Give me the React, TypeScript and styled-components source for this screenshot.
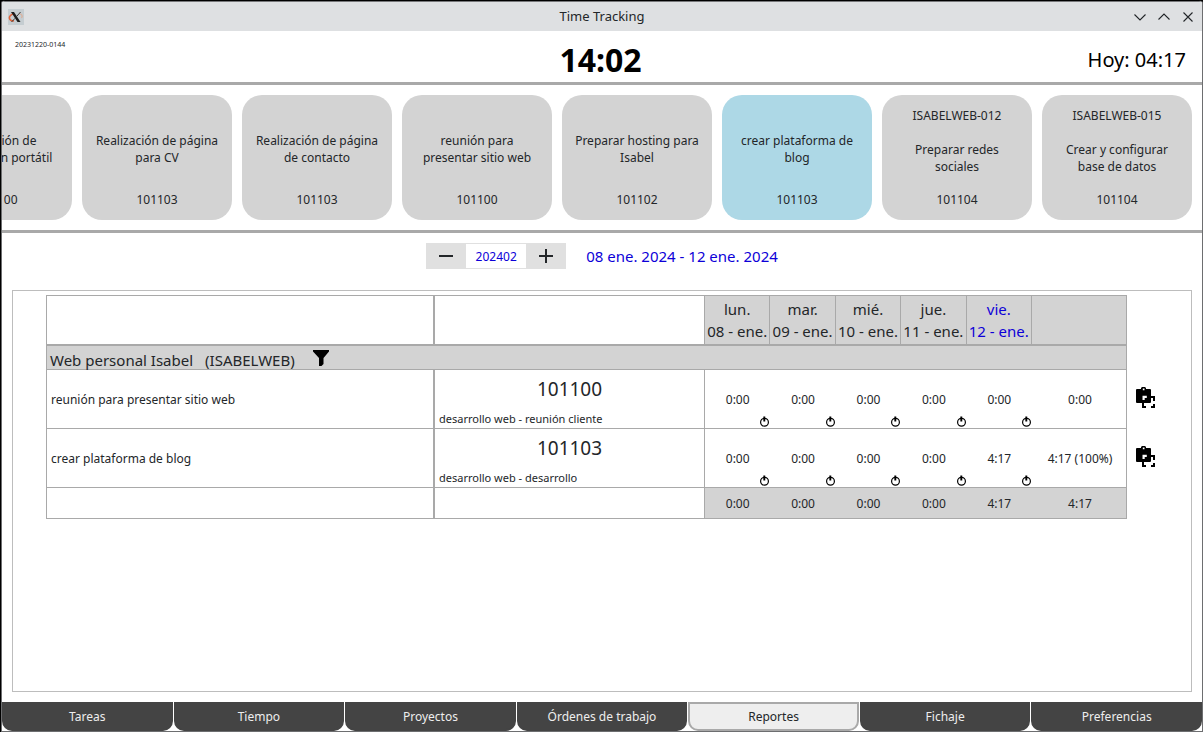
import React, { useState } from 'react';
import styled, { createGlobalStyle, css } from 'styled-components';

const line = '#a9a9a9';
const shade = '#d3d3d3';
const ink = '#232629';
const accent = '#0d00d8';

const GlobalStyle = createGlobalStyle`
  * { box-sizing: border-box; }
  body {
    margin: 0;
    background: #000;
    color: ${ink};
    font-family: 'Noto Sans', sans-serif;
    font-size: 12px;
    line-height: 17px;
  }
  button, input {
    margin: 0;
    padding: 0;
    border: 0;
    font: inherit;
    color: inherit;
  }
  button { background: none; cursor: pointer; }
  svg { display: block; }
`;

const Window = styled.div`
  display: flex;
  flex-direction: column;
  min-height: 100vh;
  border: 1px solid #6d6e70;
  border-radius: 4px 4px 0 0;
  margin-left: 1px;
  background: #fff;
  overflow: hidden;
  border-top-color: #000;
`;

const TitleBar = styled.header`
  display: grid;
  grid-template-columns: 1fr auto 1fr;
  align-items: center;
  height: 30px;
  padding: 0 6px;
  background: #dee0e2;
  border-top: 1px solid #77787a;
  font-size: 13px;
`;

const WindowTitle = styled.h1`
  margin: 0;
  font-size: inherit;
  font-weight: 400;
`;

const WindowControls = styled.div`
  display: flex;
  justify-content: flex-end;
  gap: 8px;
`;

const Header = styled.div`
  display: grid;
  grid-template-columns: 1fr auto 1fr;
  align-items: center;
  height: 54px;
  padding: 0 16px 0 13px;
  border-bottom: 3px solid ${line};
  color: #000;
`;

const Version = styled.span`
  align-self: start;
  padding-top: 5px;
  color: ${ink};
  font-size: 7px;
`;

const Clock = styled.strong`
  padding-top: 6px;
  font-size: 32px;
  line-height: 44px;
`;

const Today = styled.span`
  justify-self: end;
  padding-top: 6px;
  font-size: 20px;
  line-height: 28px;
`;

const Strip = styled.div`
  display: flex;
  justify-content: flex-end;
  gap: 10px;
  padding: 10px;
  border-bottom: 3px solid ${line};
  overflow: hidden;
`;

const Card = styled.button<{ $active?: boolean }>`
  display: flex;
  flex: none;
  flex-direction: column;
  align-items: center;
  width: 150px;
  height: 125px;
  padding: 12px 10px;
  border-radius: 20px;
  background: ${(p) => (p.$active ? '#add8e6' : shade)};
`;

const CardTitle = styled.span`
  display: flex;
  flex: 1;
  align-items: center;
  text-align: center;
`;

const WeekBar = styled.div`
  display: flex;
  justify-content: center;
  align-items: center;
  gap: 20px;
  padding: 10px 10px 21px;
  color: ${accent};
`;

const Stepper = styled.div`
  display: flex;
  height: 26px;
`;

const StepButton = styled.button`
  display: grid;
  place-items: center;
  width: 40px;
  background: #e0e0e0;
  color: ${ink};
`;

const WeekInput = styled.input`
  width: 60px;
  border: solid #e0e0e0;
  border-width: 1px 0;
  text-align: center;
`;

const WeekRange = styled.span`
  font-size: 15px;
`;

const Panel = styled.main`
  flex: 1;
  margin: 0 10px 10px;
  padding: 4px 0 4px 33px;
  border: 1px solid #bdbdbd;
`;

const Report = styled.table`
  width: 100%;
  min-width: 1080px;
  table-layout: fixed;
  border-spacing: 0;
`;

const TaskCol = styled.col` width: 389px; `;
const OrderCol = styled.col` width: 270px; `;
const TotalCol = styled.col` width: 95px; `;
const ActionCol = styled.col` width: 64px; `;

const cell = css`
  padding: 0;
  border: 0 solid ${line};
  border-bottom-width: 1px;
  font-weight: 400;
`;

const HeadCell = styled.th<{ $filled?: boolean; $today?: boolean; $wide?: boolean }>`
  ${cell}
  height: 51px;
  border-width: 1px ${(p) => (p.$wide ? 2 : 1)}px 2px 0;
  &:first-child { border-left-width: 1px; }
  background: ${(p) => (p.$filled ? shade : 'transparent')};
  color: ${(p) => (p.$today ? accent : 'inherit')};
  font-size: 15px;
  line-height: 22px;
  white-space: nowrap;
`;

const GroupCell = styled.th`
  ${cell}
  height: 24px;
  padding: 0 3px;
  border-left-width: 1px;
  border-right-width: 1px;
  background: ${shade};
  font-size: 15px;
  line-height: 21px;
  text-align: left;
`;

const GroupLine = styled.div`
  display: flex;
  align-items: flex-start;
  height: 23px;
  padding-top: 4px;
`;

const GroupCode = styled.span`
  margin: 0 18px 0 12px;
`;

const TaskCell = styled.th`
  ${cell}
  height: 59px;
  padding: 0 4px;
  border-left-width: 1px;
  border-right-width: 2px;
  text-align: left;
`;

const OrderCell = styled.td`
  ${cell}
  padding: 4px 4px 0;
  border-right-width: 1px;
`;

const OrderNumber = styled.div`
  margin-bottom: 7px;
  font-size: 19px;
  line-height: 28px;
  text-align: center;
`;

const OrderNote = styled.div`
  font-size: 11px;
`;

const TimeCell = styled.td<{ $last?: boolean }>`
  ${cell}
  position: relative;
  border-right-width: ${(p) => (p.$last ? 1 : 0)}px;
  padding-left: ${(p) => (p.$last ? 2 : 0)}px;
  text-align: center;
`;

const StartButton = styled.button`
  position: absolute;
  right: 0;
  bottom: 1px;
`;

const ActionCell = styled.td`
  padding: 1px 0 0 9px;
`;

const SumBlank = styled.td<{ $wide?: boolean }>`
  ${cell}
  height: 31px;
  border-right-width: ${(p) => (p.$wide ? 2 : 1)}px;
  &:first-child { border-left-width: 1px; }
`;

const SumCell = styled(TimeCell)`
  background: ${shade};
`;

const Tabs = styled.nav`
  display: grid;
  grid-template-columns: repeat(7, 1fr);
  gap: 1px;
`;

const Tab = styled.button<{ $active?: boolean }>`
  height: 29px;
  border: 2px solid ${(p) => (p.$active ? line : '#444')};
  border-radius: 0 0 10px 10px;
  background: ${(p) => (p.$active ? '#eee' : '#444')};
  color: ${(p) => (p.$active ? ink : '#eee')};
`;

const AppIcon = () => (
  <svg width="16" height="16" viewBox="0 0 16 16" aria-hidden="true">
    <rect width="16" height="16" fill="#c5cdd1" />
    <path d="M6 4.5C2 5.5 .5 8.500 2 10.500 3 12 5 12 6 11.800" fill="none" stroke="#e0633a" strokeWidth="1.600" />
    <path d="M11 4.500C14 5 15 7 13.500 9" fill="none" stroke="#dcae98" strokeWidth="1.200" />
    <path d="M3 3h3l6.500 10H9.500z" fill="#1c1c1c" />
    <path d="M12.500 3 8.800 7.300M7 9.300 3.500 13" stroke="#3c3c3c" strokeWidth="1" />
  </svg>
);

const ControlIcon = ({ d }: { d: string }) => (
  <svg width="16" height="16" viewBox="0 0 16 16" fill="none" stroke={ink} strokeWidth="1.100" aria-hidden="true">
    <path d={d} />
  </svg>
);

const SignIcon = ({ plus }: { plus?: boolean }) => (
  <svg width="14" height="14" viewBox="0 0 14 14" stroke={ink} strokeWidth="2" aria-hidden="true">
    <path d={plus ? 'M0 7H14M7 0V14' : 'M0 7H14'} />
  </svg>
);

const FunnelIcon = () => (
  <svg width="16" height="16" viewBox="0 0 16 16" aria-hidden="true">
    <path d="M0 0H16V1.500L10.500 8V14L8.500 16H6V8L0 1.500Z" fill="#000" />
  </svg>
);

const PowerIcon = () => (
  <svg width="11" height="11" viewBox="0 0 11 11" fill="none" stroke="#000" aria-hidden="true">
    <circle cx="5.500" cy="6.300" r="3.900" strokeWidth="1.200" />
    <path d="M5.300 .5V5.500" strokeWidth="1.900" />
  </svg>
);

const CopyIcon = () => (
  <svg width="20" height="22" viewBox="0 0 20 22" aria-hidden="true">
    <path
      fill="#000"
      fillRule="evenodd"
      d="M1 2H5V1L6 0H9L10 1V2H14Q15 2 15 3V15Q15 16 14 16H1Q0 16 0 15V3Q0 2 1 2ZM6.800 1.500V3.200H8.500V1.500ZM6.500 8.700V13H8.700V11H10.800V8.700Z"
    />
    <path fill="#000" d="M15 9H19V14H17V11H15ZM6 16H8V19H10V21H6ZM15 19H17V17H19V21H15Z" />
  </svg>
);

const cards = [
  { title: 'Instalación de software\u00a0en\u00a0portátil', order: '101100' },
  { title: 'Realización de página para CV', order: '101103' },
  { title: 'Realización de página de contacto', order: '101103' },
  { title: 'reunión para presentar sitio web', order: '101100' },
  { title: 'Preparar hosting para Isabel', order: '101102' },
  { title: 'crear plataforma de blog', order: '101103', active: true },
  { ticket: 'ISABELWEB-012', title: 'Preparar redes sociales', order: '101104' },
  { ticket: 'ISABELWEB-015', title: 'Crear y configurar base de datos', order: '101104' },
];

const days = [
  ['lun.', '08 - ene.'],
  ['mar.', '09 - ene.'],
  ['mié.', '10 - ene.'],
  ['jue.', '11 - ene.'],
  ['vie.', '12 - ene.'],
];

const tasks = [
  {
    name: 'reunión para presentar sitio web',
    order: '101100',
    note: 'desarrollo web - reunión cliente',
    times: ['0:00', '0:00', '0:00', '0:00', '0:00'],
    total: '0:00',
  },
  {
    name: 'crear plataforma de blog',
    order: '101103',
    note: 'desarrollo web - desarrollo',
    times: ['0:00', '0:00', '0:00', '0:00', '4:17'],
    total: '4:17 (100%)',
  },
];

const sums = ['0:00', '0:00', '0:00', '0:00', '4:17', '4:17'];

const tabs = ['Tareas', 'Tiempo', 'Proyectos', 'Órdenes de trabajo', 'Reportes', 'Fichaje', 'Preferencias'];

export default function App() {
  const [week, setWeek] = useState('202402');
  const [tab, setTab] = useState('Reportes');
  const step = (n: number) => setWeek(String(Number(week) + n));

  return (
    <>
      <GlobalStyle />
      <Window>
        <TitleBar>
          <AppIcon />
          <WindowTitle>Time Tracking</WindowTitle>
          <WindowControls>
            <button aria-label="Minimizar"><ControlIcon d="M2.500 5.500 8 11 13.500 5.500" /></button>
            <button aria-label="Maximizar"><ControlIcon d="M2.500 10.500 8 5 13.500 10.500" /></button>
            <button aria-label="Cerrar"><ControlIcon d="M3.500 3.500 12.500 12.500M12.500 3.500 3.500 12.500" /></button>
          </WindowControls>
        </TitleBar>

        <Header>
          <Version>20231220-0144</Version>
          <Clock>14:02</Clock>
          <Today>Hoy: 04:17</Today>
        </Header>

        <Strip>
          {cards.map((c) => (
            <Card key={c.title} $active={c.active}>
              {c.ticket && <span>{c.ticket}</span>}
              <CardTitle>{c.title}</CardTitle>
              <span>{c.order}</span>
            </Card>
          ))}
        </Strip>

        <WeekBar>
          <Stepper>
            <StepButton aria-label="Semana anterior" onClick={() => step(-1)}><SignIcon /></StepButton>
            <WeekInput aria-label="Semana" value={week} onChange={(e) => setWeek(e.target.value)} />
            <StepButton aria-label="Semana siguiente" onClick={() => step(1)}><SignIcon plus /></StepButton>
          </Stepper>
          <WeekRange>08 ene. 2024 - 12 ene. 2024</WeekRange>
        </WeekBar>

        <Panel>
          <Report>
            <colgroup>
              <TaskCol />
              <OrderCol />
              {days.map(([d]) => <col key={d} />)}
              <TotalCol />
              <ActionCol />
            </colgroup>
            <thead>
              <tr>
                <HeadCell $wide />
                <HeadCell />
                {days.map(([name, date]) => (
                  <HeadCell key={name} scope="col" $filled $today={name === 'vie.'}>
                    {name}<br />{date}
                  </HeadCell>
                ))}
                <HeadCell $filled />
              </tr>
            </thead>
            <tbody>
              <tr>
                <GroupCell colSpan={8}>
                  <GroupLine>
                    <span>Web personal Isabel</span>
                    <GroupCode>(ISABELWEB)</GroupCode>
                    <button aria-label="Filtrar"><FunnelIcon /></button>
                  </GroupLine>
                </GroupCell>
              </tr>
              {tasks.map((t) => (
                <tr key={t.name}>
                  <TaskCell scope="row">{t.name}</TaskCell>
                  <OrderCell>
                    <OrderNumber>{t.order}</OrderNumber>
                    <OrderNote>{t.note}</OrderNote>
                  </OrderCell>
                  {t.times.map((time, i) => (
                    <TimeCell key={i}>
                      {time}
                      <StartButton aria-label="Iniciar"><PowerIcon /></StartButton>
                    </TimeCell>
                  ))}
                  <TimeCell $last>{t.total}</TimeCell>
                  <ActionCell><button aria-label="Copiar"><CopyIcon /></button></ActionCell>
                </tr>
              ))}
            </tbody>
            <tfoot>
              <tr>
                <SumBlank $wide />
                <SumBlank />
                {sums.map((s, i) => <SumCell key={i} $last={i === 5}>{s}</SumCell>)}
              </tr>
            </tfoot>
          </Report>
        </Panel>

        <Tabs>
          {tabs.map((t) => (
            <Tab key={t} $active={t === tab} onClick={() => setTab(t)}>{t}</Tab>
          ))}
        </Tabs>
      </Window>
    </>
  );
}
